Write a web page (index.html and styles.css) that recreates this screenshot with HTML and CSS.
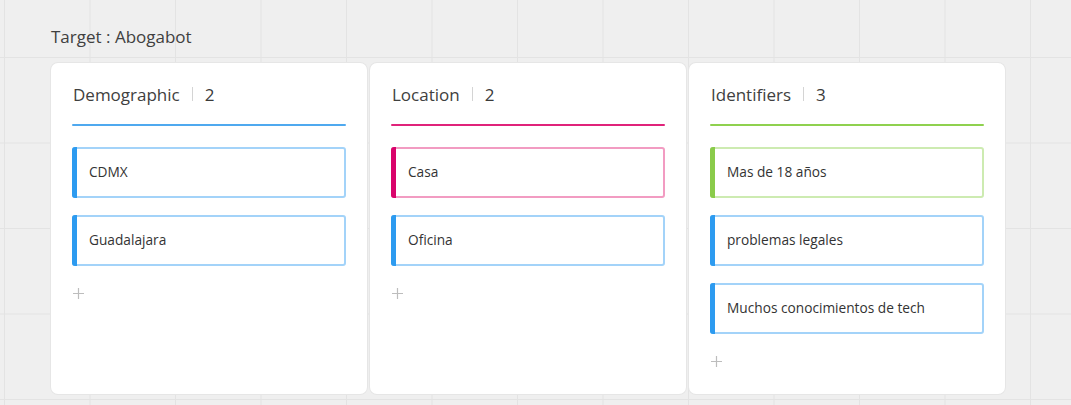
FILE: index.html
```html
<!DOCTYPE html>
<html lang="es">
<head>
<meta charset="utf-8">
<title>Target : Abogabot</title>
<link rel="stylesheet" href="styles.css">
</head>
<body>
<div class="board">
  <div class="title">Target : Abogabot</div>
  <div class="columns">
    <section class="col col-blue">
      <header class="col-head"><span class="col-name">Demographic</span><span class="sep"></span><span class="count">2</span></header>
      <div class="col-line"></div>
      <div class="items">
        <div class="item item-blue">CDMX</div>
        <div class="item item-blue">Guadalajara</div>
      </div>
      <div class="add"><svg width="11" height="11" viewBox="0 0 11 11"><path d="M5.5 0V11M0 5.5H11" stroke="#bdbdbd" stroke-width="1.2"/></svg></div>
    </section>
    <section class="col col-pink">
      <header class="col-head"><span class="col-name">Location</span><span class="sep"></span><span class="count">2</span></header>
      <div class="col-line"></div>
      <div class="items">
        <div class="item item-pink">Casa</div>
        <div class="item item-blue">Oficina</div>
      </div>
      <div class="add"><svg width="11" height="11" viewBox="0 0 11 11"><path d="M5.5 0V11M0 5.5H11" stroke="#bdbdbd" stroke-width="1.2"/></svg></div>
    </section>
    <section class="col col-green">
      <header class="col-head"><span class="col-name">Identifiers</span><span class="sep"></span><span class="count">3</span></header>
      <div class="col-line"></div>
      <div class="items">
        <div class="item item-green">Mas de 18 años</div>
        <div class="item item-blue">problemas legales</div>
        <div class="item item-blue">Muchos conocimientos de tech</div>
      </div>
      <div class="add"><svg width="11" height="11" viewBox="0 0 11 11"><path d="M5.5 0V11M0 5.5H11" stroke="#bdbdbd" stroke-width="1.2"/></svg></div>
    </section>
  </div>
</div>
</body>
</html>
```

FILE: styles.css
```css
html, body {
  margin: 0;
  padding: 0;
  height: 100%;
}
body {
  background-color: #efefef;
  background-image:
    linear-gradient(to right, #e3e3e3 1px, transparent 1px),
    linear-gradient(to bottom, #e3e3e3 1px, transparent 1px);
  background-size: 85.5px 85.5px;
  background-position: 4px 57px;
  font-family: "Open Sans", "Noto Sans", sans-serif;
  color: #3a3a3a;
  overflow: hidden;
}
.board {
  padding: 26px 0 0 51px;
}
.title {
  font-size: 17px;
  line-height: 22px;
  color: #404040;
  height: 37px;
}
.columns {
  display: flex;
  gap: 3.5px;
}
.col {
  width: 315.5px;
  height: 331px;
  box-sizing: border-box;
  background: #fff;
  border-radius: 7px;
  box-shadow: 0 0 0 1px #e6e6e6;
  padding: 19px 21px 0 21px;
}
.col-head {
  display: flex;
  align-items: center;
  height: 24px;
  font-size: 17px;
  color: #404040;
  padding-left: 1px;
}
.sep {
  width: 1px;
  height: 14px;
  background: #d4d4d4;
  margin: 0 12px 0 12px;
}
.count {
  color: #3a3a3a;
}
.col-line {
  height: 2px;
  margin-top: 18px;
  border-radius: 1px;
}
.col-blue .col-line { background: #4fa9ef; }
.col-pink .col-line { background: #e0237a; }
.col-green .col-line { background: #8fd14f; }
.items {
  display: flex;
  flex-direction: column;
  gap: 17px;
  margin-top: 21px;
}
.item {
  position: relative;
  height: 51px;
  box-sizing: border-box;
  border: 2px solid #a3d3f9;
  border-radius: 3px;
  display: flex;
  align-items: center;
  padding: 0 0 3px 15px;
  font-size: 13.7px;
  color: #333;
}
.item::before {
  content: "";
  position: absolute;
  left: -2px;
  top: -2px;
  bottom: -2px;
  width: 5px;
  border-radius: 3px 0 0 3px;
  background: #2d9bf0;
}
.item-pink {
  border-color: #f29cc2;
}
.item-pink::before {
  background: #d9046b;
}
.item-green {
  border-color: #cdebb1;
}
.item-green::before {
  background: #8acb4a;
}
.add {
  margin-top: 22px;
  padding-left: 1px;
  height: 11px;
  line-height: 0;
}
```
